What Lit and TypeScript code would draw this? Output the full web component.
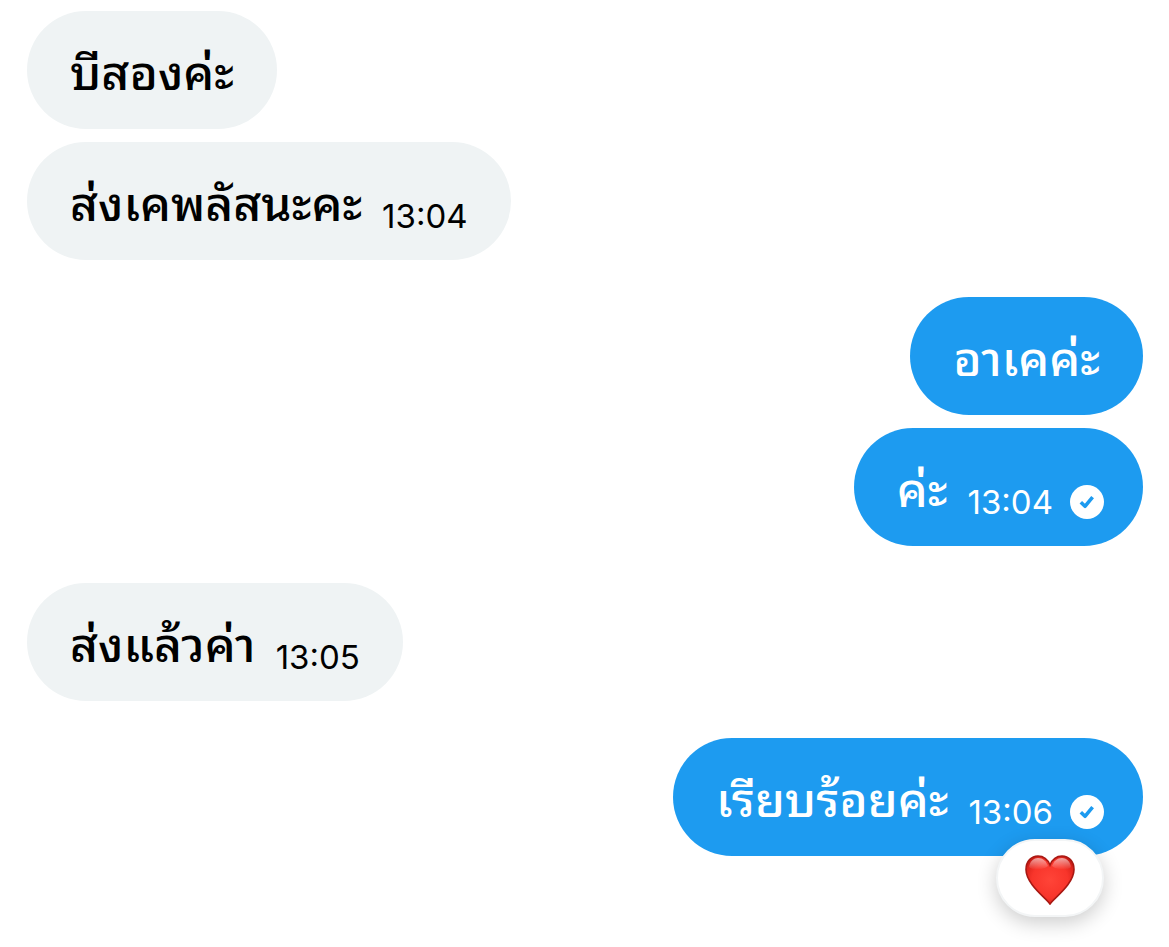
import { LitElement, html, css, svg, nothing } from "lit";
import { customElement, property } from "lit/decorators.js";

interface Message {
  text: string;
  time?: string;
  reaction?: boolean;
}

interface Group {
  sent: boolean;
  messages: Message[];
}

const groups: Group[] = [
  { sent: false, messages: [{ text: "บีสองค่ะ" }, { text: "ส่งเคพลัสนะคะ", time: "13:04" }] },
  { sent: true, messages: [{ text: "อาเคค่ะ" }, { text: "ค่ะ", time: "13:04" }] },
  { sent: false, messages: [{ text: "ส่งแล้วค่า", time: "13:05" }] },
  { sent: true, messages: [{ text: "เรียบร้อยค่ะ", time: "13:06", reaction: true }] },
];

const checkIcon = svg`
  <circle cx="17" cy="17" r="17" fill="#fff" />
  <path d="M10.800 17.300 L15 21.300 L22.600 12.200" fill="none" stroke="#1d9bf0" stroke-width="3.6" stroke-linejoin="round" />
`;

const heartIcon = svg`
  <defs>
    <radialGradient id="body" cx="0.5" cy="0.5" r="0.62">
      <stop offset="0" stop-color="#ff4438" />
      <stop offset="0.6" stop-color="#f8352b" />
      <stop offset="0.85" stop-color="#dd241c" />
      <stop offset="1" stop-color="#b5120d" />
    </radialGradient>
    <linearGradient id="shine" x1="0" y1="0" x2="0" y2="1">
      <stop offset="0" stop-color="#fff" stop-opacity="0.6" />
      <stop offset="1" stop-color="#fff" stop-opacity="0" />
    </linearGradient>
  </defs>
  <path d="M25 49 C21 43 1 29 1 14.500 C1 6 6.500 1 13 1 C19 1 23 5 25 10 C27 5 31 1 37 1 C43.500 1 49 6 49 14.500 C49 29 29 43 25 49 Z"
    fill="url(#body)" stroke="#a81812" stroke-width="1.6" />
  <path d="M4 12 C5 6 9 3 13 3 C18 3 21 6 23 11 C19 15 8 16 4 12 Z" fill="url(#shine)" />
  <path d="M46 12 C45 6 41 3 37 3 C32 3 29 6 27 11 C31 15 42 16 46 12 Z" fill="url(#shine)" />
`;

@customElement("chat-bubble")
export class ChatBubble extends LitElement {
  @property({ attribute: false }) message!: Message;
  @property({ type: Boolean, reflect: true }) sent = false;

  static styles = css`
    :host {
      display: block;
      position: relative;
      max-width: 80%;
    }
    .bubble {
      display: flex;
      align-items: center;
      gap: 20px;
      box-sizing: border-box;
      min-height: 118px;
      padding: 26px 43px 20px;
      border-radius: 59px;
      background: #eff3f4;
      color: #000;
    }
    .bubble.sent {
      background: #1d9bf0;
      color: #fff;
    }
    .bubble.receipt {
      padding-right: 39px;
    }
    .text {
      margin: 0;
      font-size: 48px;
      line-height: 72px;
      font-weight: 500;
    }
    .meta {
      display: flex;
      align-items: center;
      gap: 17px;
      padding-top: 24px;
      font-size: 33px;
      line-height: 40px;
    }
    .check {
      display: block;
      width: 34px;
      height: 34px;
    }
    .reaction {
      position: absolute;
      right: 39px;
      bottom: -61px;
      display: flex;
      align-items: center;
      justify-content: center;
      width: 108px;
      height: 78px;
      padding: 4px 0 0;
      border: 2px solid #f3f5f6;
      border-radius: 39px;
      background: #fff;
      box-shadow: 0 6px 20px rgba(0, 0, 0, 0.2);
    }
    .heart {
      display: block;
      width: 50px;
      height: 50px;
    }
  `;

  render() {
    const { text, time, reaction } = this.message;
    return html`
      <div class="bubble ${this.sent ? "sent" : ""} ${this.sent && time ? "receipt" : ""}">
        <p class="text">${text}</p>
        ${time
          ? html`<div class="meta">
              <time>${time}</time>
              ${this.sent ? html`<svg class="check" viewBox="0 0 34 34" aria-hidden="true">${checkIcon}</svg>` : nothing}
            </div>`
          : nothing}
      </div>
      ${reaction
        ? html`<button class="reaction" type="button" aria-label="❤">
            <svg class="heart" viewBox="0 0 50 50" aria-hidden="true">${heartIcon}</svg>
          </button>`
        : nothing}
    `;
  }
}

@customElement("app-root")
export class AppRoot extends LitElement {
  static styles = css`
    :host {
      display: block;
      box-sizing: border-box;
      min-height: 100vh;
      padding: 11px 26px 91px 27px;
      background: #fff;
      font-family: Inter, "Noto Sans Thai Looped", Loma, Garuda, Waree, Umpush, Laksaman, "Tlwg Typo", Sarabun, "Noto Serif Thai", "Droid Sans Thai", FreeSerif, Tahoma, "Noto Sans", sans-serif;
    }
    .thread {
      display: flex;
      flex-direction: column;
      gap: 37px;
    }
    .group {
      display: flex;
      flex-direction: column;
      align-items: flex-start;
      gap: 13px;
    }
    .group.sent {
      align-items: flex-end;
    }
  `;

  render() {
    return html`
      <main class="thread" lang="th">
        ${groups.map(
          (group) => html`<section class="group ${group.sent ? "sent" : ""}">
            ${group.messages.map(
              (message) => html`<chat-bubble .message=${message} ?sent=${group.sent}></chat-bubble>`
            )}
          </section>`
        )}
      </main>
    `;
  }
}
